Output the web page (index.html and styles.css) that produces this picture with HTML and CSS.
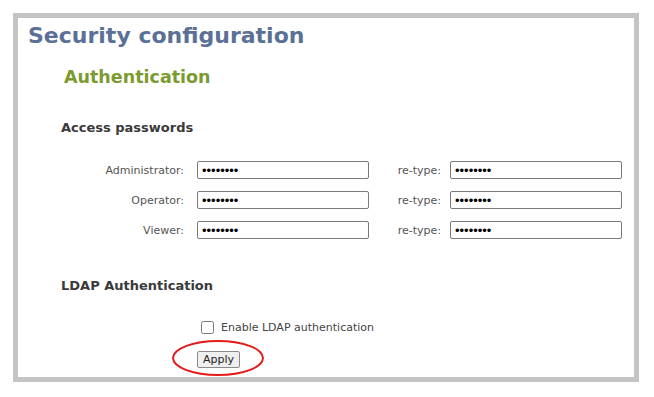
FILE: index.html
```html
<!DOCTYPE html>
<html lang="en">
<head>
    <meta charset="UTF-8">
    <title>Security configuration</title>
    <link rel="stylesheet" href="styles.css">
</head>
<body>

    <!-- Outer frame -->
    <div class="frame">
        <h1>Security configuration</h1>
        <h2>Authentication</h2>

        <!-- Access passwords -->
        <h3 class="first">Access passwords</h3>
        <div class="pw-grid">
            <label class="lbl">Administrator:</label>
            <input type="password" value="12345678">
            <label class="lbl retype">re-type:</label>
            <input type="password" value="12345678">

            <label class="lbl">Operator:</label>
            <input type="password" value="12345678">
            <label class="lbl retype">re-type:</label>
            <input type="password" value="12345678">

            <label class="lbl">Viewer:</label>
            <input type="password" value="12345678">
            <label class="lbl retype">re-type:</label>
            <input type="password" value="12345678">
        </div>

        <!-- LDAP -->
        <h3 class="ldap">LDAP Authentication</h3>
        <div class="ldap-row">
            <input type="checkbox" id="ldap">
            <label for="ldap">Enable LDAP authentication</label>
        </div>
        <div class="apply-row">
            <span class="apply-wrap">
                <button>Apply</button>
                <span class="circle"></span>
            </span>
        </div>
    </div>

</body>
</html>
```

FILE: styles.css
```css
body {
    margin: 0;
    padding: 13px;
    background-color: #fff;
    font-family: "DejaVu Sans", Verdana, sans-serif;
    color: #333;
}
/* Gray frame around the panel */
.frame {
    width: 626px;
    height: 369px;
    box-sizing: border-box;
    border: 5px solid #c4c4c4;
    padding: 0 0 0 10px;
}
h1 {
    margin: 0;
    padding-top: 4px;
    font-size: 22px;
    line-height: 28px;
    color: #5b7096;
}
h2 {
    margin: 0;
    padding-top: 16px;
    padding-left: 36px;
    font-size: 17.5px;
    line-height: 22px;
    color: #7b9b30;
}
h3 {
    margin: 0;
    padding-left: 33px;
    font-size: 13px;
    line-height: 16px;
    color: #3a3a3a;
}
h3.first {
    padding-top: 32px;
}
/* Password rows */
.pw-grid {
    display: grid;
    grid-template-columns: 156px 172px 55px 172px;
    column-gap: 13px;
    row-gap: 12px;
    margin-top: 25px;
    align-items: center;
}
.pw-grid .retype {
    margin-right: -4px;
}
.lbl {
    text-align: right;
    font-size: 11px;
    color: #555;
}
input[type="password"] {
    box-sizing: border-box;
    width: 172px;
    height: 18px;
    margin: 0;
    padding: 0 4px;
    border: 1px solid #7a7a7a;
    border-radius: 2px;
    font-size: 13px;
    color: #000;
}
h3.ldap {
    padding-top: 39px;
}
.ldap-row {
    display: flex;
    align-items: center;
    margin-top: 27px;
    padding-left: 173px;
    font-size: 11px;
    color: #444;
}
.ldap-row input {
    width: 13px;
    height: 13px;
    margin: 0 7px 0 0;
}
.apply-row {
    margin-top: 14px;
    padding-left: 169px;
}
.apply-wrap {
    position: relative;
    display: inline-block;
}
button {
    width: 43px;
    height: 17px;
    padding: 0;
    font-family: "DejaVu Sans", Verdana, sans-serif;
    font-size: 11px;
    color: #222;
    background-color: #efefef;
    border: 1px solid #8a8a8a;
    border-radius: 2px;
}
/* Red highlight ellipse */
.circle {
    position: absolute;
    left: -25px;
    top: -8px;
    width: 88px;
    height: 32px;
    border: 2px solid #e31b1b;
    border-radius: 50%;
}
```
